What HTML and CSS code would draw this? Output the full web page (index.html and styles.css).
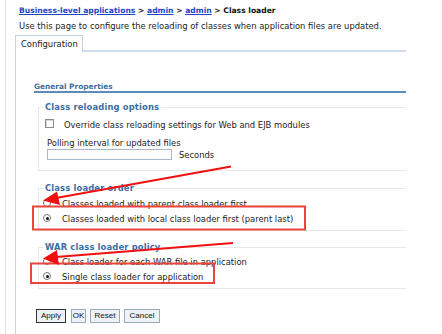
FILE: index.html
```html
<!DOCTYPE html>
<html>
<head>
<meta charset="utf-8">
<link rel="stylesheet" href="styles.css">
</head>
<body>
<div class="page">
  <div class="crumbs"><a href="#">Business-level applications</a> &gt; <a href="#">admin</a> &gt; <a href="#">admin</a> &gt; <b>Class loader</b></div>
  <div class="desc">Use this page to configure the reloading of classes when application files are updated.</div>
  <div class="tabs">
    <div class="tab">Configuration</div>
    <div class="tabline"></div>
  </div>
  <div class="panel">
    <div class="gp">General Properties</div>
    <fieldset class="fs fs1">
      <legend>Class reloading options</legend>
      <label class="row chk"><span class="cb"></span><span>Override class reloading settings for Web and EJB modules</span></label>
      <div class="poll">Polling interval for updated files</div>
      <div class="inrow"><span class="input"></span><span class="unit">Seconds</span></div>
    </fieldset>
    <fieldset class="fs fs2">
      <legend>Class loader order</legend>
      <div class="row r1"><span class="rd"></span><span>Classes loaded with parent class loader first</span></div>
      <div class="row r2"><span class="rd on"></span><span>Classes loaded with local class loader first (parent last)</span></div>
    </fieldset>
    <fieldset class="fs fs3">
      <legend>WAR class loader policy</legend>
      <div class="row r1 r1b"><span class="rd"></span><span>Class loader for each WAR file in application</span></div>
      <div class="row r2"><span class="rd on"></span><span>Single class loader for application</span></div>
    </fieldset>
    <div class="buttons">
      <button class="btn def">Apply</button>
      <button class="btn ok">OK</button>
      <button class="btn reset">Reset</button>
      <button class="btn cancel">Cancel</button>
    </div>
  </div>
</div>
<svg class="marks" width="442" height="334" viewBox="0 0 442 334">
  <rect x="33" y="206.5" width="272" height="23" fill="none" stroke="#e8453c" stroke-width="2"/>
  <rect x="31" y="263.5" width="183" height="19.5" fill="none" stroke="#e8453c" stroke-width="2"/>
  <line x1="231" y1="166.5" x2="56" y2="198" stroke="#f01010" stroke-width="2"/>
  <polygon points="43,200.5 57,191.5 60,205" fill="#f01010"/>
  <line x1="233" y1="243" x2="56" y2="257" stroke="#f01010" stroke-width="2"/>
  <polygon points="43,258.5 57,250 59,265" fill="#f01010"/>
</svg>
</body>
</html>
```

FILE: styles.css
```css
html, body {
  margin: 0;
  padding: 0;
  background: #fff;
  overflow: hidden;
}
body {
  width: 442px;
  height: 334px;
  position: relative;
  font-family: "DejaVu Sans", Verdana, sans-serif;
  font-size: 8.4px;
  color: #222;
}
.page {
  margin-left: 5px;
  border-left: 1px solid #e2e2e2;
  padding-left: 9px;
  height: 334px;
  box-sizing: border-box;
  display: flex;
  flex-direction: column;
  overflow: hidden;
}
.crumbs {
  padding: 6px 0 0 4px;
  height: 10px;
  line-height: 10px;
  font-weight: bold;
  font-size: 7.6px;
  color: #222;
  flex: none;
}
.crumbs a {
  color: #2345c8;
  text-decoration: underline;
}
.crumbs b {
  color: #111;
}
.desc {
  padding: 5px 0 0 4px;
  height: 10px;
  line-height: 10px;
  flex: none;
}
.tabs {
  display: flex;
  margin-top: 4px;
  height: 17px;
  flex: none;
}
.tab {
  width: 61px;
  border: 1px solid #c5d2e3;
  border-bottom: none;
  padding-left: 5px;
  line-height: 17px;
  box-sizing: content-box;
  background: #fff;
}
.tabline {
  width: 323px;
  border-bottom: 2px solid #d0dcec;
  height: 15px;
}
.panel {
  border-left: 1px solid #c5d2e3;
  flex: 1;
  min-height: 0;
  padding-left: 18px;
  width: 372px;
}
.gp {
  margin-top: 30px;
  height: 9px;
  line-height: 10px;
  color: #3c6da3;
  font-weight: bold;
  font-size: 7.4px;
  border-bottom: 2px solid #5b8cba;
}
.fs {
  margin: 0 0 0 4px;
  padding: 0 0 0 7px;
  border: 1px solid #e8e8e8;
  border-right: none;
  min-width: 0;
}
.fs legend {
  padding: 0 2px 0 1px;
  margin-left: -2px;
  color: #3c6da3;
  font-weight: bold;
  font-size: 8.4px;
  letter-spacing: 0.15px;
  line-height: 11px;
  height: 10px;
}
.fs1 {
  margin-top: 9px;
  padding-bottom: 10px;
}
.fs2 {
  margin-top: 12px;
  padding-bottom: 7px;
}
.fs3 {
  margin-top: 11px;
  padding-bottom: 7px;
}
.row {
  display: flex;
  align-items: center;
  height: 10px;
  line-height: 10px;
}
.row > span:last-child {
  position: relative;
  top: 1px;
}
.chk {
  margin-top: 7px;
  height: 9px;
}
.cb {
  width: 7px;
  height: 7px;
  border: 1px solid #8a8a8a;
  box-shadow: inset 1px 1px 0 #d8d8d8;
  margin-left: -1px;
  margin-right: 10px;
  flex: none;
}
.poll {
  margin-top: 10px;
  padding-left: 1px;
  line-height: 10px;
  height: 10px;
}
.inrow {
  display: flex;
  align-items: center;
  margin-top: 1px;
  height: 11px;
}
.input {
  width: 123px;
  height: 9px;
  border: 1px solid #a8b8cc;
  margin-left: 1px;
}
.unit {
  margin-left: 7px;
}
.rd {
  width: 6px;
  height: 6px;
  border: 1px solid #777;
  border-radius: 50%;
  margin-left: -3px;
  margin-right: 11px;
  flex: none;
  position: relative;
  background: #fff;
}
.rd.on::after {
  content: "";
  position: absolute;
  left: 1.5px;
  top: 1.5px;
  width: 3px;
  height: 3px;
  border-radius: 50%;
  background: #111;
}
.r1 {
  margin-top: 5px;
}
.r1b {
  margin-top: 4px;
}
.r2 {
  margin-top: 5px;
}
.buttons {
  display: flex;
  gap: 4px;
  margin-top: 20px;
  margin-left: 2px;
}
.btn {
  font-family: "Liberation Sans", Arial, sans-serif;
  font-size: 8px;
  height: 14px;
  padding: 0;
  margin: 0;
  border: 1px solid #9aaac0;
  background: #eef1f6;
  color: #111;
  line-height: 12px;
  text-align: center;
}
.btn.def {
  border: 1px solid #333;
  width: 30px;
  margin-right: 1px;
}
.btn.ok { width: 15px; }
.btn.reset { width: 30px; }
.btn.cancel { width: 36px; }
.marks {
  position: absolute;
  left: 0;
  top: 0;
  pointer-events: none;
}
```
